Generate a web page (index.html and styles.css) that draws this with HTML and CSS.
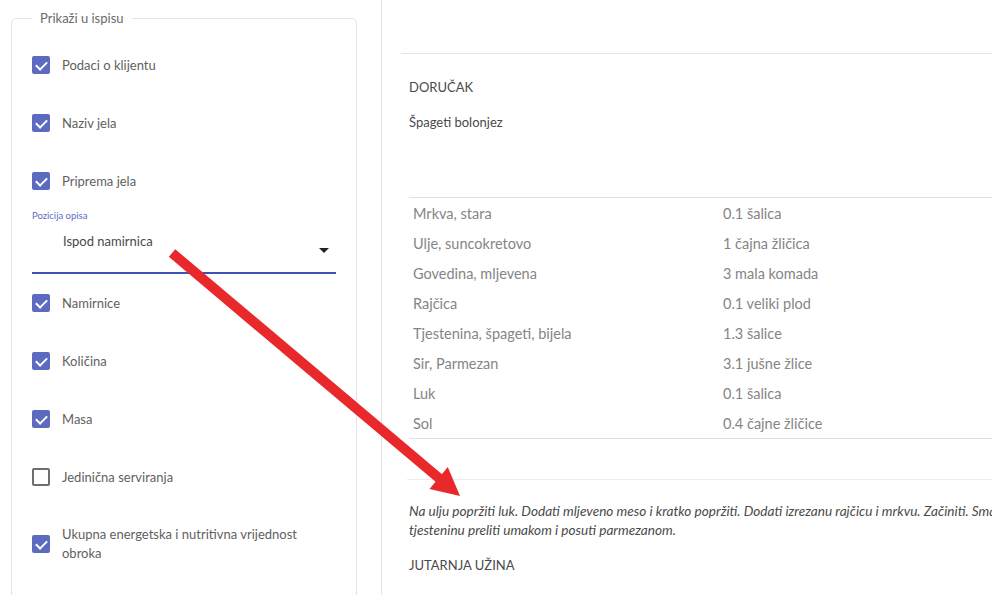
FILE: index.html
```html
<!DOCTYPE html>
<html lang="hr">
<head>
<meta charset="utf-8">
<title>Prikaži u ispisu</title>
<link rel="stylesheet" href="styles.css">
</head>
<body>
<div class="page">
  <aside class="sidebar">
    <fieldset class="options">
      <legend>Prikaži u ispisu</legend>
      <label class="opt"><span class="box checked"></span><span class="opt-text">Podaci o klijentu</span></label>
      <label class="opt"><span class="box checked"></span><span class="opt-text">Naziv jela</span></label>
      <label class="opt"><span class="box checked"></span><span class="opt-text">Priprema jela</span></label>
      <div class="select">
        <div class="select-label">Pozicija opisa</div>
        <div class="select-field">
          <span class="select-value">Ispod namirnica</span>
          <span class="caret"></span>
        </div>
      </div>
      <label class="opt"><span class="box checked"></span><span class="opt-text">Namirnice</span></label>
      <label class="opt"><span class="box checked"></span><span class="opt-text">Količina</span></label>
      <label class="opt"><span class="box checked"></span><span class="opt-text">Masa</span></label>
      <label class="opt"><span class="box"></span><span class="opt-text">Jedinična serviranja</span></label>
      <label class="opt tall"><span class="box checked"></span><span class="opt-text">Ukupna energetska i nutritivna vrijednost obroka</span></label>
    </fieldset>
  </aside>
  <main class="preview">
    <div class="top-rule"></div>
    <div class="meal">
      <div class="meal-title">DORUČAK</div>
      <div class="dish">Špageti bolonjez</div>
      <table class="ingredients">
        <tr><td>Mrkva, stara</td><td>0.1 šalica</td></tr>
        <tr><td>Ulje, suncokretovo</td><td>1 čajna žličica</td></tr>
        <tr><td>Govedina, mljevena</td><td>3 mala komada</td></tr>
        <tr><td>Rajčica</td><td>0.1 veliki plod</td></tr>
        <tr><td>Tjestenina, špageti, bijela</td><td>1.3 šalice</td></tr>
        <tr><td>Sir, Parmezan</td><td>3.1 jušne žlice</td></tr>
        <tr><td>Luk</td><td>0.1 šalica</td></tr>
        <tr><td>Sol</td><td>0.4 čajne žličice</td></tr>
      </table>
      <div class="sep"></div>
      <p class="desc">Na ulju popržiti luk. Dodati mljeveno meso i kratko popržiti. Dodati izrezanu rajčicu i mrkvu. Začiniti. Smanjiti vatru i pirjati 15 minuta. Skuhanu<br>tjesteninu preliti umakom i posuti parmezanom.</p>
      <div class="meal-title next">JUTARNJA UŽINA</div>
    </div>
  </main>
  <svg class="annotation" width="992" height="595" viewBox="0 0 992 595" aria-hidden="true">
    <line x1="172" y1="253" x2="440" y2="479" stroke="#e8282b" stroke-width="10"/>
    <polygon points="460,496 429.5,488.9 447.8,467" fill="#e8282b"/>
  </svg>
</div>
</body>
</html>
```

FILE: styles.css
```css
html, body {
  margin: 0;
  padding: 0;
  overflow: hidden;
  background: #fff;
}
body {
  font-family: Lato, "Open Sans", "Liberation Sans", sans-serif;
  color: #4a4a4a;
}
.page {
  position: relative;
  display: flex;
  width: 992px;
  height: 595px;
  overflow: hidden;
}
.sidebar {
  flex: 0 0 381px;
  height: 595px;
  border-right: 1px solid #e3e3e3;
  box-sizing: border-box;
  padding: 10px 24px 0 11px;
}
.options {
  margin: 0;
  border: 1px solid #e2e2e2;
  border-radius: 5px;
  padding: 10px 20px 20px 20px;
  min-height: 620px;
  box-sizing: border-box;
}
.options legend {
  padding: 0 8px;
  font-size: 13px;
  line-height: 16px;
  color: #6a6a6a;
}
.opt {
  display: flex;
  align-items: center;
  height: 58px;
  gap: 12px;
  font-size: 13px;
  line-height: 19px;
  color: #5f5f5f;
}
.opt.tall {
  height: 76px;
}
.opt-text {
  max-width: 245px;
}
.box {
  flex: 0 0 18px;
  width: 18px;
  height: 18px;
  border: 2px solid #6e6e6e;
  border-radius: 2px;
  box-sizing: border-box;
  position: relative;
}
.box.checked {
  background: #5c6bc0;
  border-color: #5c6bc0;
}
.box.checked::after {
  content: "";
  position: absolute;
  left: 4px;
  top: 1px;
  width: 5px;
  height: 9px;
  border: solid #fff;
  border-width: 0 2px 2px 0;
  transform: rotate(45deg);
}
.select {
  height: 64px;
  width: 304px;
  display: flex;
  flex-direction: column;
}
.select-label {
  font-size: 9.5px;
  line-height: 12px;
  color: #5c6bc0;
}
.select-field {
  flex: 1;
  display: flex;
  align-items: flex-start;
  justify-content: space-between;
  border-bottom: 2px solid #3f51b5;
  padding: 9px 7px 0 31px;
}
.select-value {
  font-size: 13px;
  line-height: 20px;
  color: #4a4a4a;
}
.caret {
  width: 0;
  height: 0;
  margin-top: 17px;
  border-left: 5px solid transparent;
  border-right: 5px solid transparent;
  border-top: 5px solid #222;
}
.preview {
  flex: 0 0 auto;
  width: 700px;
  padding-left: 19px;
}
.top-rule {
  height: 54px;
  border-bottom: 1px solid #e3e3e3;
  box-sizing: border-box;
}
.meal {
  padding-left: 8px;
}
.meal-title {
  font-size: 13px;
  line-height: 18px;
  color: #4a4a4a;
  margin-top: 24px;
}
.dish {
  font-size: 13px;
  line-height: 18px;
  margin-top: 17px;
  color: #4a4a4a;
}
.ingredients {
  margin-top: 66px;
  width: 100%;
  border-collapse: collapse;
  border-top: 1px solid #e0e0e0;
  border-bottom: 1px solid #e0e0e0;
}
.ingredients td {
  height: 30px;
  padding: 0 4px;
  font-size: 14.5px;
  color: #858585;
  vertical-align: middle;
}
.ingredients td:first-child {
  width: 302px;
}
.sep {
  margin: 40px 0 0 -2px;
  border-top: 1px solid #ececec;
}
.desc {
  margin: 22px 0 0;
  font-size: 13.6px;
  line-height: 19px;
  font-style: italic;
  color: #4a4a4a;
  white-space: nowrap;
}
.meal-title.next {
  margin-top: 16px;
}
.annotation {
  position: absolute;
  left: 0;
  top: 0;
  pointer-events: none;
}
```
